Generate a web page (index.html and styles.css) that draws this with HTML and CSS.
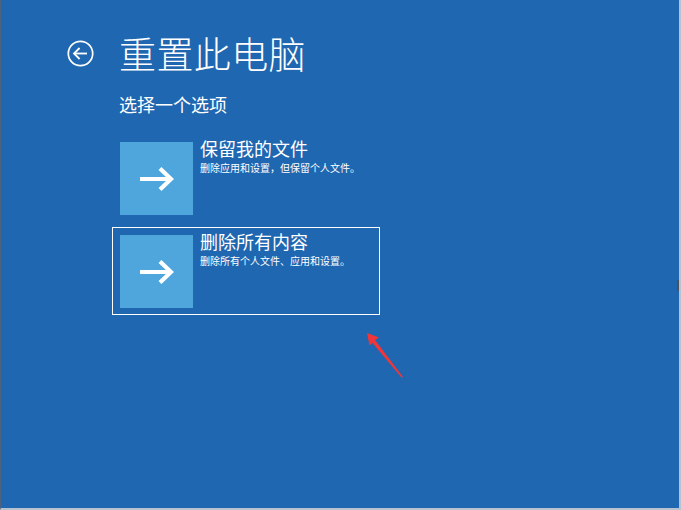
FILE: index.html
```html
<!DOCTYPE html>
<html lang="zh-CN">
<head>
<meta charset="utf-8">
<title>重置此电脑</title>
<link rel="stylesheet" href="styles.css">
</head>
<body>
<div class="screen">
  <div class="header">
    <svg class="back" width="27" height="27" viewBox="0 0 27 27">
      <circle cx="13.5" cy="13.5" r="12.2" fill="none" stroke="#fff" stroke-width="1.7"/>
      <path d="M7 13.5 H20" stroke="#fff" stroke-width="1.8" fill="none"/>
      <path d="M12.6 8 L7 13.5 L12.6 19" stroke="#fff" stroke-width="1.8" fill="none"/>
    </svg>
    <h1 class="title">重置此电脑</h1>
  </div>
  <div class="subtitle">选择一个选项</div>
  <div class="options">
    <div class="option">
      <div class="tile">
        <svg width="34" height="24" viewBox="0 0 34 24">
          <path d="M0 12 H31" stroke="#fff" stroke-width="4" fill="none"/>
          <path d="M20 1.5 L31 12 L20 22.5" stroke="#fff" stroke-width="4.2" fill="none"/>
        </svg>
      </div>
      <div class="text">
        <div class="opt-title">保留我的文件</div>
        <div class="opt-desc">删除应用和设置，但保留个人文件。</div>
      </div>
    </div>
    <div class="option selected">
      <div class="tile">
        <svg width="34" height="24" viewBox="0 0 34 24">
          <path d="M0 12 H31" stroke="#fff" stroke-width="4" fill="none"/>
          <path d="M20 1.5 L31 12 L20 22.5" stroke="#fff" stroke-width="4.2" fill="none"/>
        </svg>
      </div>
      <div class="text">
        <div class="opt-title">删除所有内容</div>
        <div class="opt-desc">删除所有个人文件、应用和设置。</div>
      </div>
    </div>
  </div>
  <svg class="pointer" width="50" height="56" viewBox="0 0 50 56">
    <path d="M2 2 L14 6.5 L10 9 L38 46 L36.5 46.5 L7.5 12 L4.5 14.5 Z" fill="#f0363a"/>
  </svg>
  <div class="edge-mark"></div>
</div>
</body>
</html>
```

FILE: styles.css
```css
html, body {
  margin: 0;
  padding: 0;
  background: #1f67b1;
}

.screen {
  position: relative;
  width: 681px;
  height: 510px;
  box-sizing: border-box;
  background: #1f67b1;
  border-left: 1px solid #4d6480;
  border-right: 2px solid #b9c3cf;
  border-bottom: 2px solid #b9c3cf;
  font-family: "Noto Sans CJK SC", "Noto Sans", sans-serif;
  color: #fff;
  overflow: hidden;
}

.header {
  display: flex;
  align-items: center;
  padding-left: 66px;
  padding-top: 31px;
  height: 44px;
}

.back {
  flex: none;
}

.title {
  margin: 0 0 0 25px;
  font-size: 37px;
  font-weight: 300;
  line-height: 44px;
  letter-spacing: 0.4px;
}

.subtitle {
  margin: 18px 0 0 118px;
  font-size: 18px;
  line-height: 22px;
  font-weight: 400;
}

.options {
  display: flex;
  flex-direction: column;
  gap: 5px;
  margin: 19px 0 0 111px;
}

.option {
  display: flex;
  width: 268px;
  height: 88px;
  box-sizing: border-box;
  padding: 7px;
  border: 1px solid transparent;
}

.option.selected {
  border-color: #ffffff;
}

.tile {
  flex: none;
  width: 73px;
  height: 73px;
  background: #4ea6dc;
  display: flex;
  align-items: center;
  justify-content: center;
}

.text {
  margin-left: 7px;
  margin-top: -4px;
}

.opt-title {
  font-size: 18px;
  line-height: 20px;
}

.opt-desc {
  font-size: 10px;
  line-height: 12px;
  margin-top: 4px;
}

.pointer {
  position: absolute;
  left: 364px;
  top: 331px;
}

.edge-mark {
  position: absolute;
  right: 0;
  top: 280px;
  width: 2px;
  height: 11px;
  background: #4a5260;
}
```
